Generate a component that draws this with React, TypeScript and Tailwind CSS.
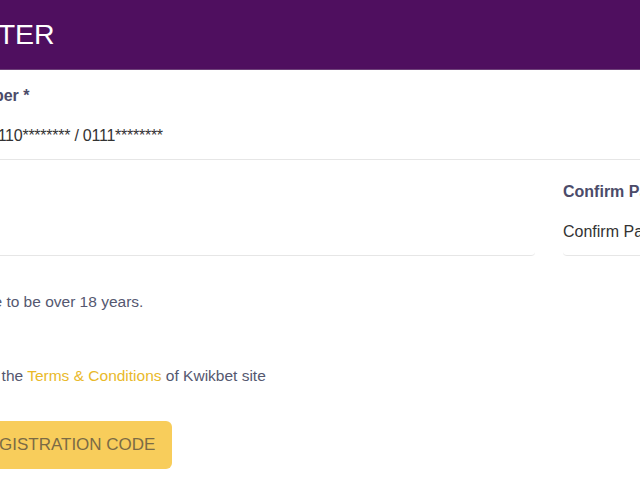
import React from 'react';

const font = { fontFamily: '"Liberation Sans", Arial, sans-serif' };

const Field: React.FC<{ label: string; placeholder: string; type?: string; className?: string }> = ({
  label,
  placeholder,
  type = 'text',
  className = '',
}) => (
  <div className={`flex flex-col ${className}`}>
    <label className="text-[16px] leading-[20px] font-bold text-[#4b4b69]">{label}</label>
    <input
      type={type}
      placeholder={placeholder}
      className="mt-[6px] h-[48px] w-full bg-transparent text-[16px] text-[#333] placeholder:text-[#333] outline-none border-b border-[#e6e6e6] rounded-[4px]"
    />
  </div>
);

export default function App() {
  return (
    <div className="w-[640px] h-[480px] overflow-hidden bg-white" style={font}>
      <header className="h-[70px] bg-[#4f0f5f] border-b border-[#6e4179] flex items-center">
        <h1 className="-ml-[91px] text-[28.5px] text-white whitespace-nowrap">REGISTER</h1>
      </header>

      <form className="-ml-[100px] w-[1298px] pt-[16px]">
        <div className="flex flex-col">
          <label className="text-[16px] leading-[20px] font-bold text-[#4b4b69] pl-[5px]">Phone Number *</label>
          <div className="mt-[6px] h-[48px] flex items-center border-b border-[#e6e6e6] rounded-[4px]">
            <span className="w-[89px] shrink-0" />
            <input
              type="tel"
              placeholder="0110******** / 0111********"
              className="flex-1 bg-transparent text-[16px] tracking-[-0.25px] text-[#333] placeholder:text-[#333] outline-none"
            />
          </div>
        </div>

        <div className="mt-[22px] grid grid-cols-2 gap-[28px]">
          <Field label="Password *" placeholder="Password" type="password" />
          <Field label="Confirm Password *" placeholder="Confirm Password" type="password" />
        </div>

        <label className="mt-[36px] flex items-center gap-[10px] pl-[10px] text-[15.5px] leading-[20px] text-[#555870] whitespace-nowrap">
          <input type="checkbox" className="w-[18px] h-[18px]" />
          <span>You have to be over 18 years.</span>
        </label>

        <label className="mt-[54px] flex items-center gap-[10px] pl-[15px] text-[15.5px] leading-[20px] text-[#555870] whitespace-nowrap">
          <input type="checkbox" className="w-[18px] h-[18px]" />
          <span>
            I accept the <a className="text-[#e9b92a]">Terms &amp; Conditions</a> of Kwikbet site
          </span>
        </label>

        <div className="mt-[35px] pl-[21px]">
          <button
            type="button"
            className="h-[48px] pl-[15px] pr-[17px] rounded-[6px] bg-[#f8cd5b] text-[17px] text-[#7b6b45] whitespace-nowrap"
          >
            GET REGISTRATION CODE
          </button>
        </div>
      </form>
    </div>
  );
}
